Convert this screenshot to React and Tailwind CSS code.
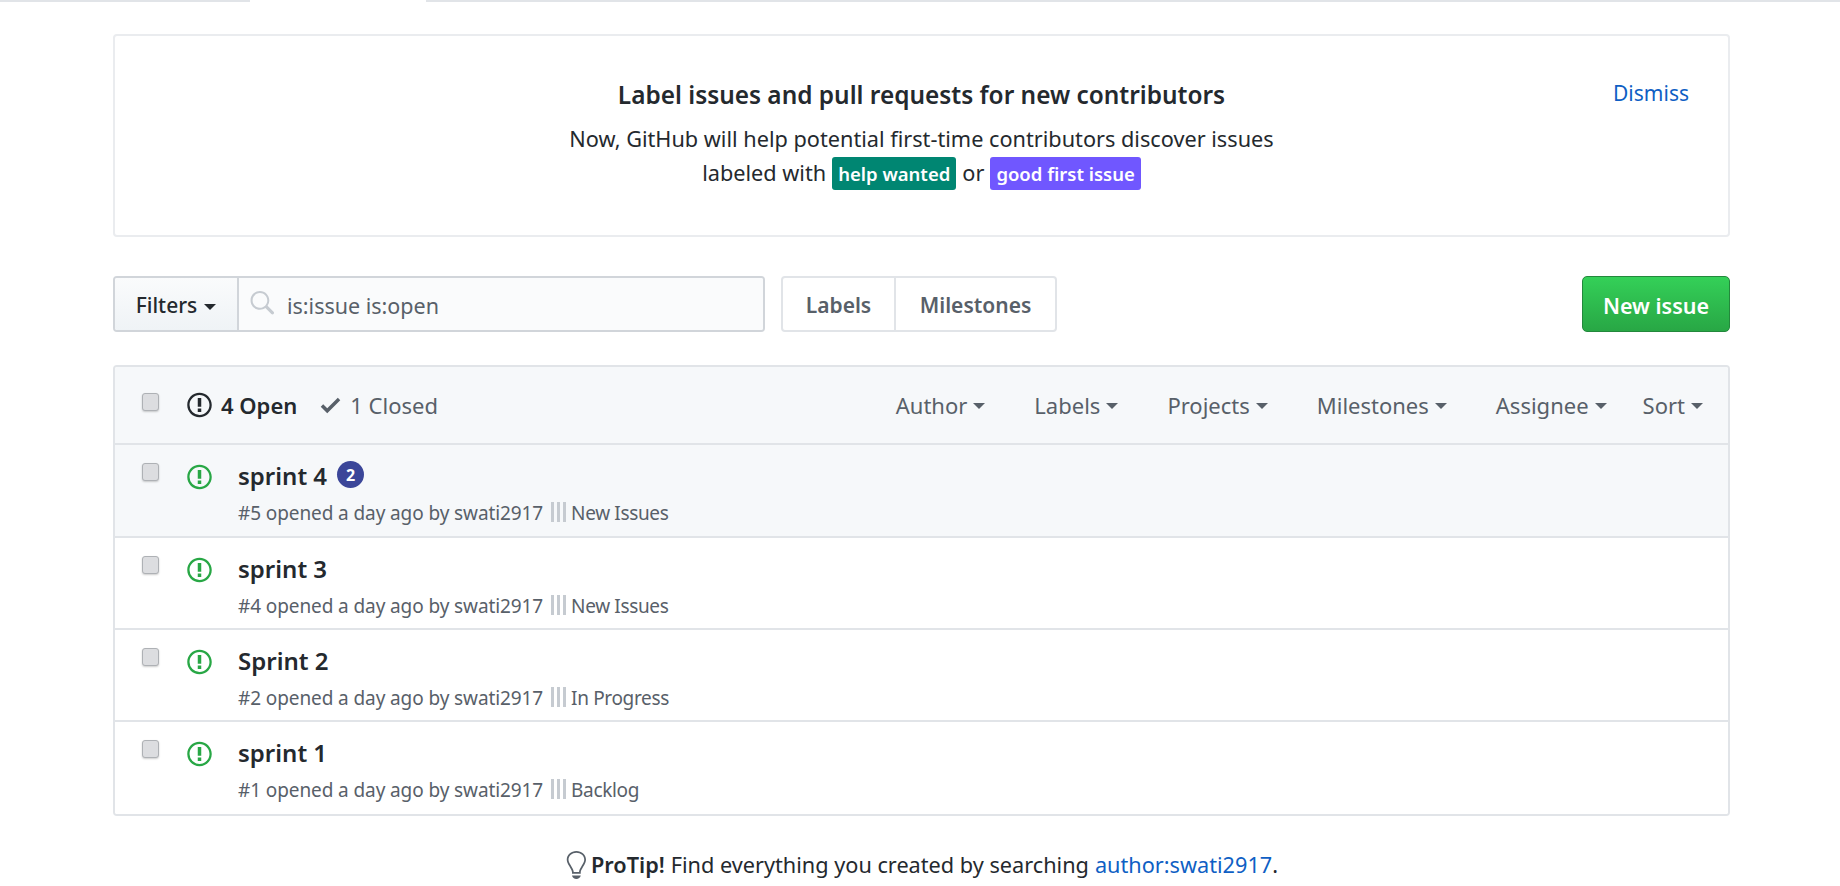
import React from 'react';

const font = 'font-["Noto_Sans","Open_Sans",sans-serif]';

const IssueIcon = ({ className }) => (
  <svg viewBox="0 0 14 16" className={className} fill="currentColor">
    <path fillRule="evenodd" d="M7 2.3c3.14 0 5.7 2.56 5.7 5.7s-2.56 5.7-5.7 5.7A5.71 5.71 0 011.3 8c0-3.14 2.56-5.7 5.7-5.7zM7 1C3.14 1 0 4.14 0 8s3.14 7 7 7 7-3.14 7-7-3.14-7-7-7zm1 3H6v5h2V4zm0 6H6v2h2v-2z" />
  </svg>
);

const Caret = ({ className = '' }) => (
  <span className={`inline-block w-0 h-0 border-x-[6px] border-x-transparent border-t-[6px] border-t-current ${className}`} />
);

const Checkbox = () => (
  <input
    type="checkbox"
    className="appearance-none block w-[17px] h-[18px] rounded-[3px] bg-[#dcdde0] border border-[#aeb1b5] shadow-[0_1px_2px_rgba(0,0,0,0.2)]"
  />
);

const ProjectBars = () => (
  <svg viewBox="0 0 15 20" className="w-[15px] h-[20px] ml-[8px] mr-[5px] -mt-[3px] text-[#c6cbd1]" fill="currentColor">
    <rect x="0" y="0" width="3" height="20" />
    <rect x="6" y="0" width="3" height="20" />
    <rect x="12" y="0" width="3" height="20" />
  </svg>
);

const filters = [
  { name: 'Author', gap: 'ml-0' },
  { name: 'Labels', gap: 'ml-[49px]' },
  { name: 'Projects', gap: 'ml-[49px]' },
  { name: 'Milestones', gap: 'ml-[49px]' },
  { name: 'Assignee', gap: 'ml-[49px]' },
  { name: 'Sort', gap: 'ml-[36px]' },
];

const issues = [
  { title: 'sprint 4', num: 5, project: 'New Issues', badge: 2, bg: 'bg-[#f6f8fa]', h: 'h-[93px]' },
  { title: 'sprint 3', num: 4, project: 'New Issues', bg: 'bg-white', h: 'h-[92px]' },
  { title: 'Sprint 2', num: 2, project: 'In Progress', bg: 'bg-white', h: 'h-[92px]' },
  { title: 'sprint 1', num: 1, project: 'Backlog', bg: 'bg-white', h: 'h-[92px]' },
];

const IssueRow = ({ issue, last }) => (
  <div className={`flex ${issue.h} ${issue.bg} ${last ? '' : 'border-b-2 border-[#e1e4e8]'}`}>
    <div className="w-[72px] pl-[27px] pt-[18px] shrink-0">
      <Checkbox />
    </div>
    <div className="w-[51px] pt-[18px] shrink-0 text-[#28a745]">
      <IssueIcon className="w-[25px] h-[28px]" />
    </div>
    <div className="pt-[13px]">
      <div className="flex items-center h-[36px] text-[24px] font-semibold text-[#24292e]">
        {issue.title}
        {issue.badge && (
          <span className="ml-[10px] w-[27px] h-[27px] rounded-full bg-[#3b4699] text-white text-[16px] font-bold flex items-center justify-center -mt-[3px]">
            {issue.badge}
          </span>
        )}
      </div>
      <div className="flex items-center h-[26px] mt-[6px] text-[19px] text-[#586069] tracking-[-0.1px]">
        #{issue.num} opened a day ago by swati2917
        <ProjectBars />
        <span className="tracking-[-0.35px]">{issue.project}</span>
      </div>
    </div>
  </div>
);

export default function App() {
  return (
    <div className={`min-h-screen bg-white overflow-hidden ${font}`}>
      <div className="flex h-[2px]">
        <div className="w-[250px] bg-[#e1e4e8]" />
        <div className="w-[176px]" />
        <div className="flex-1 bg-[#e1e4e8]" />
      </div>

      <div className="w-[1617px] ml-[113px] mt-[32px]">
        {/* Bandeau */}
        <div className="relative h-[203px] border-2 border-[#eaecef] rounded-[4px] text-center pt-[41px]">
          <a href="#" className="absolute right-[39px] top-[42px] text-[21px] text-[#0f5fc4]">Dismiss</a>
          <h2 className="text-[24.4px] leading-[36px] font-semibold text-[#24292e]">
            Label issues and pull requests for new contributors
          </h2>
          <p className="mt-[8px] text-[21.7px] leading-[36px] text-[#24292e]">
            Now, GitHub will help potential first-time contributors discover issues
          </p>
          <p className="flex items-center justify-center h-[33px] text-[21.7px] text-[#24292e]">
            labeled with
            <span className="ml-[6px] h-[33px] leading-[33px] px-[6px] rounded-[3px] bg-[#008672] text-white text-[18.5px] font-semibold">help wanted</span>
            <span className="mx-[6px]">or</span>
            <span className="h-[33px] leading-[33px] px-[6px] rounded-[3px] bg-[#7057ff] text-white text-[18.5px] font-semibold">good first issue</span>
          </p>
        </div>

        {/* Filtres */}
        <div className="flex items-center mt-[39px] h-[56px]">
          <div className="flex w-[652px] h-[56px] border-2 border-[#d1d5da] rounded-[4px] overflow-hidden">
            <div className="flex items-center w-[124px] justify-center pt-[4px] bg-gradient-to-b from-[#fafbfc] to-[#eff3f6] border-r-2 border-[#d1d5da] text-[21px] font-medium text-[#24292e]">
              Filters
              <Caret className="ml-[7px] mt-[2px]" />
            </div>
            <div className="flex items-center flex-1 bg-[#fafbfc] pl-[10px] pt-[4px] text-[21.5px] text-[#586069]">
              <svg viewBox="0 0 16 16" className="w-[25px] h-[25px] text-[#c6cbd1] -mt-[6px] mr-[13px]" fill="currentColor">
                <path fillRule="evenodd" d="M15.7 13.3l-3.81-3.83A5.93 5.93 0 0013 6c0-3.31-2.69-6-6-6S1 2.69 1 6s2.69 6 6 6c1.3 0 2.48-.41 3.47-1.11l3.83 3.81c.19.2.45.3.72.3.27 0 .53-.09.7-.3a.996.996 0 00.01-1.4h-.03zM7 10.7c-2.59 0-4.7-2.11-4.7-4.7 0-2.59 2.11-4.7 4.7-4.7 2.59 0 4.7 2.11 4.7 4.7 0 2.59-2.11 4.7-4.7 4.7z" />
              </svg>
              is:issue is:open
            </div>
          </div>

          <div className="flex ml-[16px] h-[56px] border-2 border-[#e1e4e8] rounded-[4px] text-[21px] font-semibold text-[#586069]">
            <div className="flex items-center justify-center w-[113px] pt-[4px] border-r-2 border-[#e1e4e8]">Labels</div>
            <div className="flex items-center justify-center w-[159px] pt-[4px]">Milestones</div>
          </div>

          <button className="ml-auto w-[148px] h-[56px] pt-[4px] rounded-[5px] border border-[#23883c] bg-gradient-to-b from-[#34d058] to-[#28a745] text-white text-[21.5px] font-semibold">
            New issue
          </button>
        </div>

        {/* Tableau */}
        <div className="mt-[33px] border-2 border-[#e1e4e8] rounded-[4px] overflow-hidden">
          <div className="flex items-center h-[78px] bg-[#f6f8fa] border-b-2 border-[#e1e4e8] text-[22px] text-[#586069]">
            <div className="w-[72px] pl-[27px] shrink-0 -mt-[7px]">
              <Checkbox />
            </div>
            <IssueIcon className="w-[25px] h-[28px] text-[#24292e]" />
            <span className="ml-[9px] font-semibold text-[#24292e]">4 Open</span>
            <svg viewBox="0 0 12 16" className="ml-[23px] mr-[9px] w-[21px] h-[26px] text-[#586069]" fill="currentColor">
              <path fillRule="evenodd" d="M12 5l-8 8-4-4 1.5-1.5L4 10l6.5-6.5L12 5z" />
            </svg>
            <span>1 Closed</span>
            <div className="flex items-center ml-auto mr-[25px]">
              {filters.map((f) => (
                <span key={f.name} className={`flex items-center ${f.gap}`}>
                  {f.name}
                  <Caret className="ml-[6px] mt-[2px]" />
                </span>
              ))}
            </div>
          </div>
          {issues.map((issue, i) => (
            <IssueRow key={issue.num} issue={issue} last={i === issues.length - 1} />
          ))}
        </div>

        {/* Astuce */}
        <div className="flex items-center justify-center mt-[33px] h-[32px] text-[21.7px] text-[#24292e]">
          <svg viewBox="0 0 12 16" className="w-[21px] h-[28px] text-[#586069] mr-[5px]" fill="currentColor">
            <path fillRule="evenodd" d="M6.5 0C3.48 0 1 2.19 1 5c0 .92.55 2.25 1 3 1.34 2.25 1.78 2.78 2 4v1h5v-1c.22-1.22.66-1.75 2-4 .45-.75 1-2.08 1-3 0-2.81-2.48-5-5.5-5zm3.64 7.48c-.25.44-.47.8-.67 1.11-.86 1.41-1.25 2.06-1.45 3.23-.02.05-.02.11-.02.17H5c0-.06 0-.13-.02-.17-.2-1.17-.59-1.83-1.45-3.23-.2-.31-.42-.67-.67-1.11C2.44 6.78 2 5.65 2 5c0-2.2 2.02-4 4.5-4 1.22 0 2.36.42 3.22 1.19C10.55 2.94 11 3.94 11 5c0 .66-.44 1.78-.86 2.48zM4 14h5c-.23 1.14-1.3 2-2.5 2s-2.27-.86-2.5-2z" />
          </svg>
          <strong className="font-semibold mr-[6px]">ProTip!</strong>
          Find everything you created by searching
          <a href="#" className="ml-[6px] text-[#0f5fc4]">author:swati2917</a>.
        </div>
      </div>
    </div>
  );
}
